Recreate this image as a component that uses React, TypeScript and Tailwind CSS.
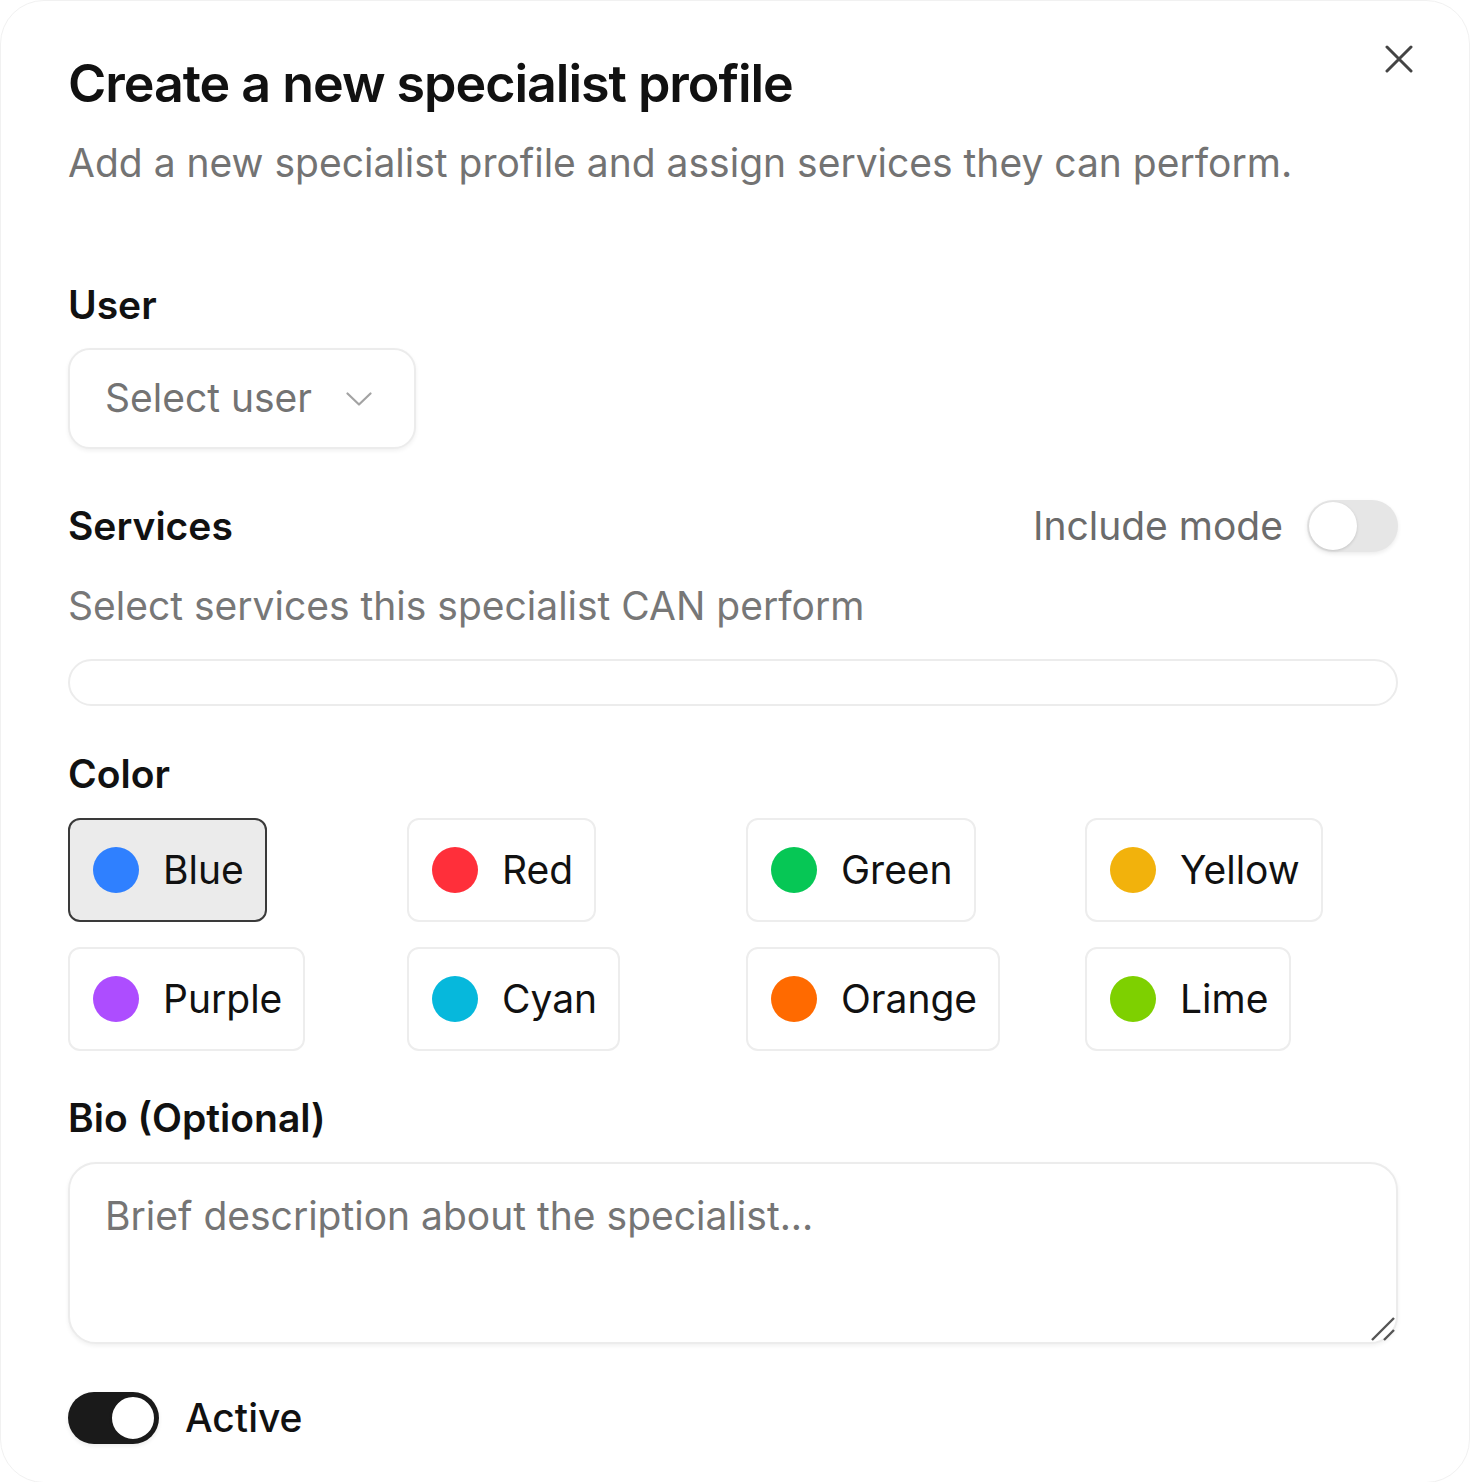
import { useState } from 'react'

const colors = [
  { id: 'blue', label: 'Blue', dot: 'bg-[#2f80ff]' },
  { id: 'red', label: 'Red', dot: 'bg-[#ff2f3a]' },
  { id: 'green', label: 'Green', dot: 'bg-[#06c755]' },
  { id: 'yellow', label: 'Yellow', dot: 'bg-[#f2b20c]' },
  { id: 'purple', label: 'Purple', dot: 'bg-[#ad4dff]' },
  { id: 'cyan', label: 'Cyan', dot: 'bg-[#06b8dc]' },
  { id: 'orange', label: 'Orange', dot: 'bg-[#ff6a00]' },
  { id: 'lime', label: 'Lime', dot: 'bg-[#7ed000]' },
]

function Toggle({ on, onChange }: { on: boolean; onChange: () => void }) {
  return (
    <button
      type="button"
      role="switch"
      aria-checked={on}
      onClick={onChange}
      className={`flex h-[52px] w-[91px] shrink-0 items-center rounded-full p-[2px] shadow-[0_2px_4px_rgba(0,0,0,0.08)] ${
        on ? 'justify-end bg-[#1a1a1a]' : 'justify-start bg-[#e6e6e6]'
      }`}
    >
      <span
        className={`block h-[48px] w-[48px] rounded-full bg-white ${
          on ? 'border-[3px] border-[#1a1a1a]' : 'shadow-[0_1px_3px_rgba(0,0,0,0.15)]'
        }`}
      />
    </button>
  )
}

export default function App() {
  const [color, setColor] = useState('blue')
  const [includeMode, setIncludeMode] = useState(false)
  const [active, setActive] = useState(true)

  return (
    <div className="min-h-screen bg-white font-['Inter',sans-serif] text-[#111]">
      <div className="relative min-h-[1482px] rounded-[44px] border border-[#f1f1f1] bg-white pt-[52px] pr-[71px] pb-[38px] pl-[67px]">
        <button
          type="button"
          aria-label="Close"
          className="absolute top-[44px] right-[56px] text-[#444]"
        >
          <svg width="28" height="28" viewBox="0 0 28 28" fill="none">
            <path d="M2 2L26 26M26 2L2 26" stroke="currentColor" strokeWidth="3" strokeLinecap="round" />
          </svg>
        </button>

        <h1 className="text-[52px] leading-[62px] font-semibold tracking-[-0.02em]">
          Create a new specialist profile
        </h1>
        <p className="mt-[24px] text-[39px] leading-[48px] text-[#737373]">
          Add a new specialist profile and assign services they can perform.
        </p>

        <label className="mt-[96px] block text-[39px] leading-[44px] font-semibold">User</label>
        <button
          type="button"
          className="mt-[21px] flex h-[101px] w-[348px] items-center justify-between rounded-[22px] border-2 border-[#ececec] bg-white pr-[42px] pl-[35px] shadow-[0_2px_4px_rgba(0,0,0,0.06)]"
        >
          <span className="text-[39px] text-[#737373]">Select user</span>
          <svg width="26" height="14" viewBox="0 0 26 14" fill="none">
            <path d="M1.5 1.5L13 12.5L24.5 1.5" stroke="#a3a3a3" strokeWidth="2.2" strokeLinecap="round" strokeLinejoin="round" />
          </svg>
        </button>

        <div className="mt-[51px] flex h-[52px] items-center justify-between">
          <span className="text-[39px] leading-[44px] font-semibold">Services</span>
          <div className="flex items-center gap-[24px]">
            <span className="text-[39px] text-[#6b6b6b]">Include mode</span>
            <Toggle on={includeMode} onChange={() => setIncludeMode((v) => !v)} />
          </div>
        </div>
        <p className="mt-[32px] text-[39px] leading-[44px] text-[#777]">
          Select services this specialist CAN perform
        </p>
        <div className="mt-[31px] h-[47px] rounded-full border-2 border-[#ececec] bg-white" />

        <label className="mt-[46px] block text-[39px] leading-[44px] font-semibold">Color</label>
        <div className="mt-[22px] grid grid-cols-4 gap-x-[26px] gap-y-[25px]">
          {colors.map((c) => {
            const selected = color === c.id
            return (
              <button
                key={c.id}
                type="button"
                onClick={() => setColor(c.id)}
                className={`flex h-[104px] w-fit items-center gap-[24px] rounded-[12px] border-2 pr-[21px] pl-[23px] ${
                  selected ? 'border-[#3a3a3a] bg-[#ebebeb]' : 'border-[#ededed] bg-white'
                }`}
              >
                <span className={`h-[46px] w-[46px] rounded-full ${c.dot}`} />
                <span className="text-[39px] text-[#111]">{c.label}</span>
              </button>
            )
          })}
        </div>

        <label className="mt-[45px] block text-[39px] leading-[44px] font-semibold">Bio (Optional)</label>
        <div className="relative mt-[22px]">
          <textarea
            placeholder="Brief description about the specialist..."
            className="block h-[182px] w-full resize-none rounded-[28px] border-2 border-[#ececec] bg-white px-[35px] py-[28px] text-[39px] leading-[48px] shadow-[0_2px_4px_rgba(0,0,0,0.06)] outline-none placeholder:text-[#757575]"
          />
          <svg
            width="26"
            height="26"
            viewBox="0 0 26 26"
            fill="none"
            className="pointer-events-none absolute right-[2px] bottom-[2px]"
          >
            <path d="M2 24L24 2M14 24L24 14" stroke="#555" strokeWidth="2.4" />
          </svg>
        </div>

        <div className="mt-[48px] flex items-center gap-[26px]">
          <Toggle on={active} onChange={() => setActive((v) => !v)} />
          <span className="text-[39px] leading-[44px] font-medium">Active</span>
        </div>
      </div>
    </div>
  )
}
